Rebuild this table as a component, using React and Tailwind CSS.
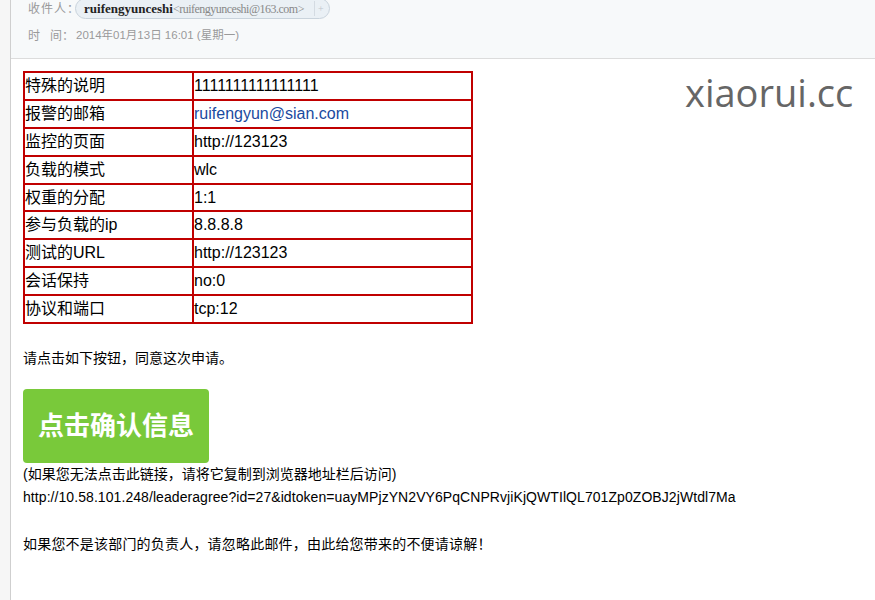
import React from "react";

const rows = [
  ["特殊的说明", "1".repeat(16)],
  ["报警的邮箱", "ruifengyun@sian.com", true],
  ["监控的页面", "http://123123"],
  ["负载的模式", "wlc"],
  ["权重的分配", "1:1"],
  ["参与负载的ip", "8.8.8.8"],
  ["测试的URL", "http://123123"],
  ["会话保持", "no:0"],
  ["协议和端口", "tcp:12"],
];

export default function App() {
  return (
    <div
      className="flex w-[875px] h-[600px] overflow-hidden bg-white"
      style={{ fontFamily: '"Liberation Sans", "Noto Sans CJK SC", sans-serif' }}
    >
      <div className="w-[11px] shrink-0 bg-[#f6f6f6] border-r border-[#cfcfcf]" />
      <div className="flex-1 flex flex-col">
        <div className="h-[59px] shrink-0 bg-[#f7f9fa] border-b border-[#dcdcdc] pl-[17px] text-[12px] text-[#9a9a9a]">
          <div className="flex items-center h-[19px] -mt-[1px]">
            <span className="tracking-[1px]">收件人</span>
            <span>：</span>
            <span
              className="flex items-center h-[21px] -ml-[4px] rounded-full border border-[#c9d3dc] bg-[#eaf0f5] pl-[8px] pr-[5px]"
              style={{ fontFamily: '"Liberation Serif", "Noto Sans CJK SC", serif' }}
            >
              <span className="font-bold text-[13px] text-[#222]">ruifengyunceshi</span>
              <span className="text-[12px] tracking-[-0.5px] text-[#888]">&lt;ruifengyunceshi@163.com&gt;</span>
              <span className="ml-[10px] h-[15px] border-l border-[#d4dbe2] pl-[3px] text-[10px] leading-[15px] text-[#c0c6cc]">+</span>
            </span>
          </div>
          <div className="flex items-center h-[20px] mt-[8px]">
            <span className="w-[48px]">时&nbsp;&nbsp;&nbsp;间：</span>
            <span className="text-[11.5px]">2014年01月13日 16:01 (星期一)</span>
          </div>
        </div>
        <div className="flex-1 relative pl-[12px] pt-[12px] text-black">
          <div
            className="absolute left-[674px] top-[5px] text-[38px] text-[#666]"
            style={{ fontFamily: '"Open Sans", sans-serif' }}
          >
            xiaorui.cc
          </div>
          <table className="w-[450px] border border-[#c00000] border-separate border-spacing-0 text-[16px]">
            <tbody>
              {rows.map(([k, v, link], i) => (
                <tr key={i} className="h-[27.9px]">
                  <td className="w-[169px] border border-[#c00000] p-0 leading-[18px]">{k}</td>
                  <td className={"border border-[#c00000] p-0 leading-[18px] " + (link ? "text-[#1a4aa0]" : "")}>{v}</td>
                </tr>
              ))}
            </tbody>
          </table>
          <div className="mt-[24px] text-[14px] leading-[20px]">请点击如下按钮，同意这次申请。</div>
          <div className="mt-[21px] flex items-center justify-center w-[186px] h-[74px] rounded-[4px] bg-[#79c93a] text-white text-[26px] font-bold">
            点击确认信息
          </div>
          <div className="text-[14px] leading-[23px]">(如果您无法点击此链接，请将它复制到浏览器地址栏后访问)</div>
          <div className="text-[14px] leading-[23px] tracking-[0.07px]">http://10.58.101.248/leaderagree?id=27&amp;idtoken=uayMPjzYN2VY6PqCNPRvjiKjQWTIlQL701Zp0ZOBJ2jWtdl7Ma</div>
          <div className="text-[14px] leading-[23px] mt-[24px] tracking-[0.2px]">如果您不是该部门的负责人，请忽略此邮件，由此给您带来的不便请谅解！</div>
        </div>
      </div>
    </div>
  );
}
